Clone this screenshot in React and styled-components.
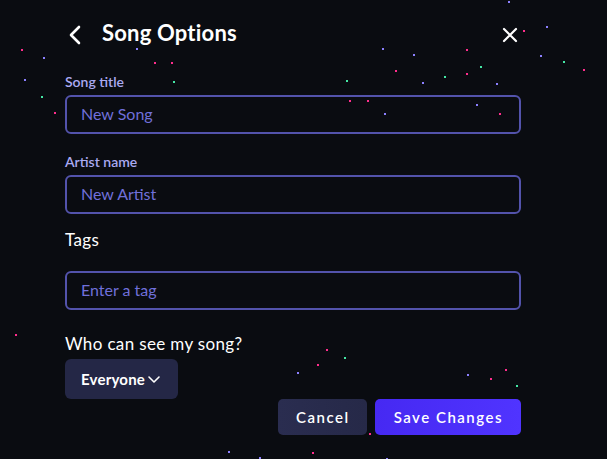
import React from 'react';
import styled, { createGlobalStyle } from 'styled-components';

const GlobalStyle = createGlobalStyle`
  html, body {
    margin: 0;
    padding: 0;
    background: #0a0c11;
  }
  body {
    font-family: Lato, "Open Sans", sans-serif;
    color: #fff;
  }
`;

const Page = styled.div`
  position: relative;
  width: 607px;
  height: 459px;
  overflow: hidden;
  background: #0a0c11;
`;

const StarField = styled.div`
  position: absolute;
  inset: 0;
  pointer-events: none;
`;

const Star = styled.span`
  position: absolute;
  width: 2px;
  height: 2px;
  background: ${({ $c }) => $c};
`;

const Panel = styled.div`
  position: relative;
  width: 456px;
  margin-left: 65px;
  padding-top: 20px;
  display: flex;
  flex-direction: column;
`;

const Header = styled.div`
  height: 30px;
  display: flex;
  align-items: center;
`;

const IconButton = styled.button`
  background: none;
  border: none;
  padding: 0;
  display: flex;
  align-items: center;
  justify-content: center;
  color: #fff;
  cursor: pointer;
`;

const Title = styled.h1`
  margin: -5px 0 0 19px;
  font-size: 22px;
  font-weight: 700;
  line-height: 30px;
  letter-spacing: 0.2px;
  flex: 1;
`;

const Label = styled.label`
  display: block;
  font-size: ${({ $big }) => ($big ? '17px' : '14px')};
  line-height: ${({ $big }) => ($big ? '20px' : '16px')};
  font-weight: ${({ $big }) => ($big ? 400 : 600)};
  letter-spacing: ${({ $big }) => ($big ? '0.35px' : '0')};
  color: ${({ $big }) => ($big ? '#ffffff' : '#aaaaf2')};
  margin-top: ${({ $top }) => $top}px;
  margin-bottom: ${({ $bottom }) => $bottom}px;
`;

const Input = styled.input`
  box-sizing: border-box;
  width: 100%;
  height: 39px;
  border: 2px solid #5353ac;
  border-radius: 6px;
  background: transparent;
  padding: 0 14px 2px;
  font-family: inherit;
  font-size: 16px;
  font-weight: 400;
  color: #7070da;
  outline: none;
  &::placeholder {
    color: #7070da;
  }
`;

const Select = styled.button`
  align-self: flex-start;
  box-sizing: border-box;
  width: 113px;
  height: 40px;
  border: none;
  border-radius: 6px;
  background: #242746;
  color: #fff;
  font-family: inherit;
  font-size: 15px;
  font-weight: 700;
  letter-spacing: 0.2px;
  padding: 0 0 0 16px;
  display: flex;
  align-items: center;
  gap: 2px;
  cursor: pointer;
`;

const Footer = styled.div`
  display: flex;
  justify-content: flex-end;
  gap: 8px;
`;

const ActionButton = styled.button`
  box-sizing: border-box;
  height: 36px;
  border: none;
  border-radius: 5px;
  padding: ${({ $primary }) => ($primary ? '0 18px 0 19px' : '0 17px 0 18px')};
  background: ${({ $primary }) =>
    $primary ? 'linear-gradient(90deg, #4629f2, #5034ff)' : 'linear-gradient(90deg, #2a2d50, #262948)'};
  color: #fff;
  font-family: inherit;
  font-size: 15px;
  font-weight: 600;
  letter-spacing: 1.5px;
  cursor: pointer;
`;

const stars = [
  [21, 49, 'p'], [43, 57, 'v'], [24, 79, 'v'], [41, 96, 'g'], [54, 112, 'p'],
  [136, 48, 'v'], [154, 62, 'p'], [171, 62, 'p'], [173, 81, 'g'], [346, 80, 'g'],
  [349, 100, 'p'], [367, 100, 'p'], [384, 113, 'v'], [382, 48, 'v'], [413, 54, 'v'],
  [395, 70, 'p'], [422, 82, 'v'], [444, 76, 'g'], [466, 49, 'p'], [466, 73, 'p'],
  [480, 66, 'g'], [496, 83, 'v'], [476, 104, 'v'], [499, 113, 'p'], [523, 30, 'p'],
  [546, 26, 'v'], [540, 55, 'v'], [563, 61, 'g'], [583, 69, 'p'], [508, 1, 'v'],
  [15, 334, 'p'], [326, 349, 'p'], [344, 357, 'g'], [317, 364, 'p'], [297, 372, 'v'],
  [467, 374, 'v'], [490, 378, 'p'], [505, 369, 'p'], [516, 385, 'g'], [369, 433, 'p'],
  [228, 451, 'v'], [259, 457, 'v'], [312, 452, 'p'], [386, 458, 'v'],
];

const starColors = { p: '#ff2e8c', v: '#8c80ff', g: '#45e8a6' };

const App = () => {
  return (
    <Page>
      <GlobalStyle />
      <StarField>
        {stars.map(([x, y, c], i) => (
          <Star key={i} $c={starColors[c]} style={{ left: x, top: y }} />
        ))}
      </StarField>
      <Panel>
        <Header>
          <IconButton aria-label="Back">
            <svg width="18" height="20" viewBox="0 0 18 20" fill="none">
              <path d="M14 2 L6 10 L14 18" stroke="#fff" strokeWidth="2.6" strokeLinecap="round" strokeLinejoin="round" />
            </svg>
          </IconButton>
          <Title>Song Options</Title>
          <IconButton aria-label="Close" style={{ marginRight: 3 }}>
            <svg width="16" height="16" viewBox="0 0 16 16" fill="none">
              <path d="M2 2 L14 14 M14 2 L2 14" stroke="#fff" strokeWidth="2.2" strokeLinecap="round" />
            </svg>
          </IconButton>
        </Header>

        <Label $top={24} $bottom={5}>Song title</Label>
        <Input defaultValue="New Song" />

        <Label $top={20} $bottom={5}>Artist name</Label>
        <Input defaultValue="New Artist" />

        <Label $big $top={16} $bottom={21}>Tags</Label>
        <Input placeholder="Enter a tag" />

        <Label $big $top={24} $bottom={5}>Who can see my song?</Label>
        <Select>
          Everyone
          <svg width="14" height="14" viewBox="0 0 14 14" fill="none">
            <path d="M2 5 L7 10 L12 5" stroke="#fff" strokeWidth="1.6" strokeLinecap="round" strokeLinejoin="round" />
          </svg>
        </Select>

        <Footer>
          <ActionButton>Cancel</ActionButton>
          <ActionButton $primary>Save Changes</ActionButton>
        </Footer>
      </Panel>
    </Page>
  );
};

export default App;
